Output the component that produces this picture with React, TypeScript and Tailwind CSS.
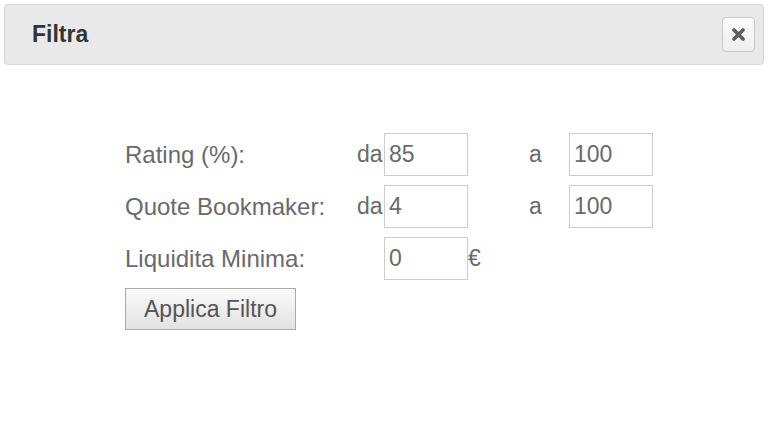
import React from "react";

export default function App() {
  const inputCls =
    "w-[84px] h-[43px] border border-[#cccccc] bg-white px-[4px] text-[23px] text-[#6a6a6a] outline-none font-['Liberation_Sans',Arial,sans-serif]";
  return (
    <div className="w-[768px] h-[423px] bg-white font-['Liberation_Sans',Arial,sans-serif] overflow-hidden">
      <div className="mx-[4px] mt-[4px] h-[61px] w-[760px] border border-[#d6d6d6] rounded-[4px] bg-[#e9e9e9] flex items-center justify-between pl-[27px] pr-[8px]">
        <span className="text-[23px] font-bold text-[#333333] leading-none">Filtra</span>
        <button className="w-[33px] h-[35px] border border-[#c8c8c8] rounded-[4px] bg-gradient-to-b from-[#fbfbfb] to-[#efefef] flex items-center justify-center">
          <svg width="15" height="15" viewBox="0 0 15 15">
            <path d="M3 3 L12 12 M12 3 L3 12" stroke="#5e5e5e" strokeWidth="3.8" strokeLinecap="round" />
          </svg>
        </button>
      </div>
      <div className="pl-[125px] pt-[68px] flex flex-col gap-[9px] text-[#6a6a6a]">
        <div className="flex items-center h-[43px]">
          <span className="w-[232px] text-[24px]">Rating (%):</span>
          <span className="w-[27px] text-[23px]">da</span>
          <input className={inputCls} value="85" readOnly />
          <span className="w-[61px]" />
          <span className="w-[40px] text-[23px]">a</span>
          <input className={inputCls} value="100" readOnly />
        </div>
        <div className="flex items-center h-[43px]">
          <span className="w-[232px] text-[24px]">Quote Bookmaker:</span>
          <span className="w-[27px] text-[23px]">da</span>
          <input className={inputCls} value="4" readOnly />
          <span className="w-[61px]" />
          <span className="w-[40px] text-[23px]">a</span>
          <input className={inputCls} value="100" readOnly />
        </div>
        <div className="flex items-center h-[43px]">
          <span className="w-[232px] text-[24px]">Liquidita Minima:</span>
          <span className="w-[27px]" />
          <input className={inputCls} value="0" readOnly />
          <span className="text-[23px]">€</span>
        </div>
        <div className="-mt-[1px]">
          <button className="w-[171px] h-[42px] border border-[#aaaaaa] bg-gradient-to-b from-[#fafafa] to-[#e2e2e2] text-[23px] text-[#555555] font-['Liberation_Sans',Arial,sans-serif]">
            Applica Filtro
          </button>
        </div>
      </div>
    </div>
  );
}
